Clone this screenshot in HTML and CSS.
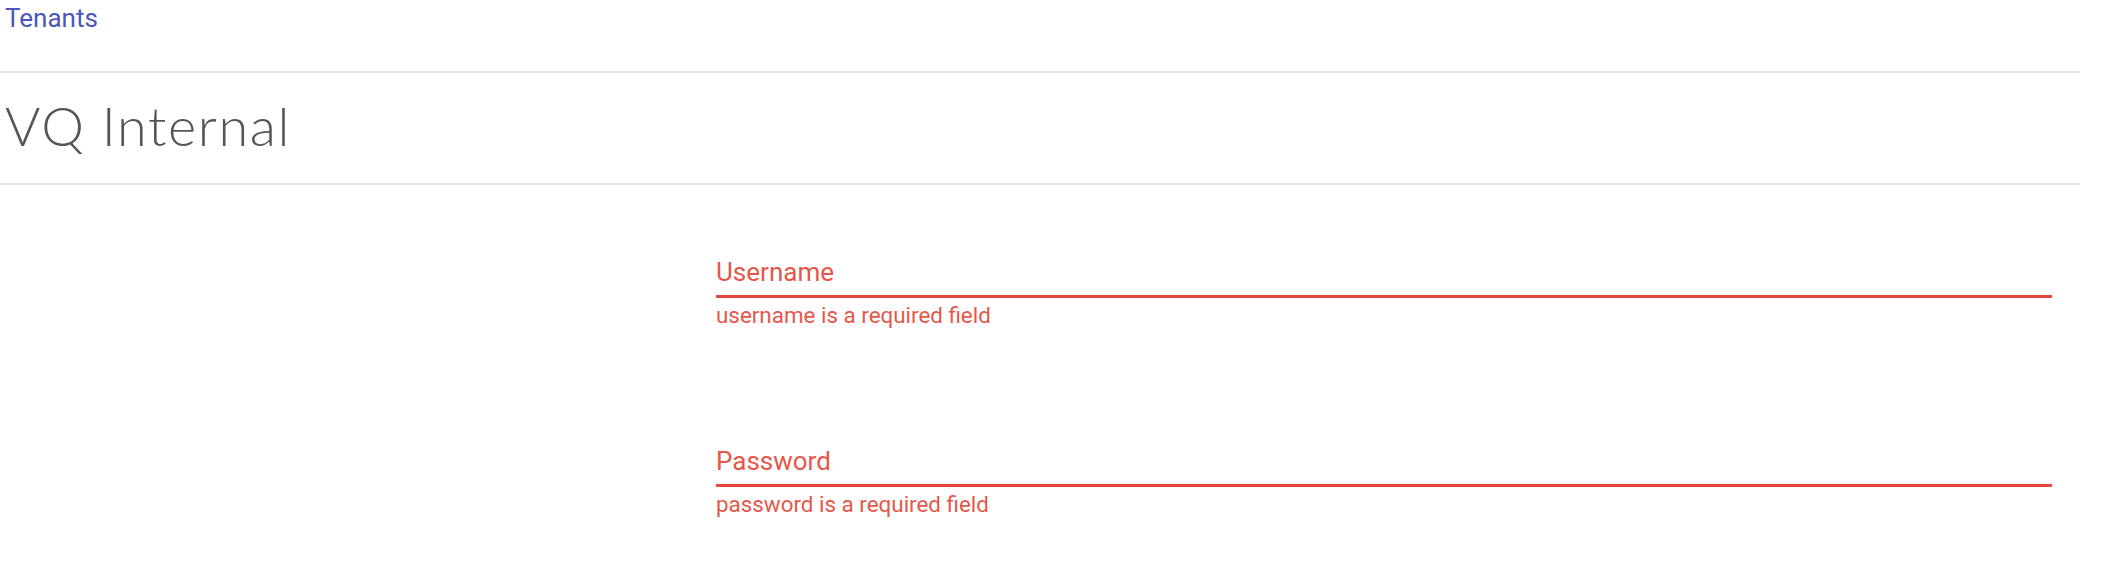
FILE: index.html
```html
<!DOCTYPE html>
<html lang="en">
<head>
<meta charset="utf-8">
<title>VQ Internal</title>
<link rel="stylesheet" href="styles.css">
</head>
<body>
<div class="page">
  <nav class="crumbs"><a class="crumb-link" href="#">Tenants</a></nav>
  <header class="title-bar"><h1 class="title">VQ Internal</h1></header>
  <main class="content">
    <form class="login-form">
      <div class="field">
        <label class="field-label">Username</label>
        <div class="field-line"></div>
        <div class="field-error">username is a required field</div>
      </div>
      <div class="field">
        <label class="field-label">Password</label>
        <div class="field-line"></div>
        <div class="field-error">password is a required field</div>
      </div>
    </form>
  </main>
</div>
</body>
</html>
```
FILE: styles.css
```css
html, body {
  margin: 0;
  padding: 0;
  background: #ffffff;
}
body {
  font-family: Roboto, "Liberation Sans", Arial, sans-serif;
}
.page {
  width: 2080px;
}
.crumbs {
  padding: 3px 0 0 5px;
  box-sizing: border-box;
  border-bottom: 2px solid #e6e6e6;
  height: 73px;
}
.crumb-link {
  font-size: 26px;
  line-height: 30px;
  color: #4a58bb;
  text-decoration: none;
}
.title-bar {
  padding: 21px 0 25px 5px;
  border-bottom: 2px solid #e6e6e6;
}
.title {
  margin: 0;
  font-family: Lato, "Open Sans", sans-serif;
  font-weight: 300;
  font-size: 54px;
  line-height: 64px;
  letter-spacing: 1.6px;
  color: #555555;
}
.content {
  padding-left: 716px;
  padding-right: 28px;
}
.login-form {
  display: flex;
  flex-direction: column;
  gap: 118px;
  padding-top: 72px;
}
.field {
  display: flex;
  flex-direction: column;
}
.field-label {
  font-size: 26px;
  line-height: 30px;
  color: #e6574a;
}
.field-line {
  margin-top: 8px;
  height: 3px;
  background: #e4473a;
}
.field-error {
  margin-top: 4px;
  font-size: 22.4px;
  line-height: 26px;
  color: #e6574a;
}
```
